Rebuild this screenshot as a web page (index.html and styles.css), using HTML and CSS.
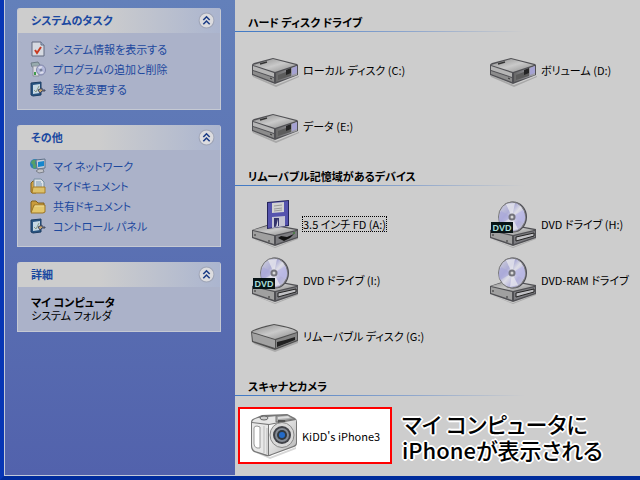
FILE: index.html
```html
<!DOCTYPE html>
<html lang="ja">
<head>
  <meta charset="UTF-8">
  <title>マイ コンピュータ</title>
  <link rel="stylesheet" href="styles.css">
</head>
<body>

  <!-- Shared icon shapes -->
  <svg class="defs" aria-hidden="true">
    <defs>
      <linearGradient id="metal" x1="0" y1="0" x2="1" y2="1">
        <stop offset="0" stop-color="#8c8c8c"/>
        <stop offset="0.5" stop-color="#c9c9c9"/>
        <stop offset="1" stop-color="#8a8a8a"/>
      </linearGradient>
      <linearGradient id="front" x1="0" y1="0" x2="1" y2="0">
        <stop offset="0" stop-color="#686868"/>
        <stop offset="1" stop-color="#a4a4ac"/>
      </linearGradient>
      <linearGradient id="disc" x1="0" y1="0" x2="1" y2="1">
        <stop offset="0" stop-color="#d6d6dc"/>
        <stop offset="0.35" stop-color="#aeaed6"/>
        <stop offset="0.5" stop-color="#dedee6"/>
        <stop offset="0.7" stop-color="#b3b1dc"/>
        <stop offset="1" stop-color="#c8c8ce"/>
      </linearGradient>
      <linearGradient id="body" x1="0" y1="0" x2="1" y2="1">
        <stop offset="0" stop-color="#ffffff"/>
        <stop offset="1" stop-color="#b4b4b4"/>
      </linearGradient>
    </defs>

    <symbol id="hdd" viewBox="0 0 48 48">
      <path d="M1 29L25 39L48 30V31L25 41L2 31Z" fill="#a8a8a8"/>
      <path d="M1 19Q1 18 3 17L22 12L46 18L47 19V29L24 38L1 29Z" fill="#505054"/>
      <path d="M2 19L22 13L45 19L24 26Z" fill="url(#metal)"/>
      <path d="M2 20L23 27V31L2 24Z" fill="#b5b5b5"/>
      <path d="M2 25L23 32V36L2 28Z" fill="#8c8c8c"/>
      <path d="M25 27L46 20V29L25 36Z" fill="url(#front)"/>
      <path d="M27 29L40 24V30L27 34Z" fill="#5c5c5c"/>
      <path d="M35 24L40 22V27L35 29Z" fill="#242424"/>
      <path d="M41 22L46 20V27L41 29Z" fill="#a5a2d2"/>
      <path d="M9 18L16 16" stroke="#333" stroke-width="1.5"/>
      <path d="M19 32L21 33" stroke="#333"/>
    </symbol>

    <symbol id="drive-base" viewBox="0 0 48 48">
      <path d="M2 39L24 47L47 38V39L24 48Z" fill="#aaa"/>
      <path d="M1 30L19 24L47 29V38L24 46L1 38Z" fill="#505054"/>
      <path d="M2 30L19 25L45 30L24 35Z" fill="url(#metal)"/>
      <path d="M2 31L23 36V44L2 37Z" fill="#a0a0a0"/>
      <path d="M25 36L46 31V37L25 44Z" fill="#7c7c80"/>
      <path d="M4 34V36M18 40V42" stroke="#333"/>
    </symbol>

    <symbol id="floppy" viewBox="0 0 48 48">
      <use href="#drive-base"/>
      <path d="M16 2L38 0V26L16 29Z" fill="#24245c"/>
      <path d="M17 3L37 1V25L17 28Z" fill="#5553ae"/>
      <path d="M21 3L33 2V12L21 13Z" fill="#d2d2d2"/>
      <path d="M23 6L31 5M23 9L31 8M23 11L31 10" stroke="#999"/>
      <path d="M21 17L34 16V26L21 28Z" fill="#c5c5d4"/>
      <path d="M23 18L28 18V26L23 27Z" fill="#34346c"/>
      <path d="M25 27L27 19V26Z" fill="#d9d9e5"/>
      <path d="M27 38L30 36L36 37L43 34L39 38L33 41Z" fill="#111"/>
      <circle cx="43" cy="33" r="1" fill="#417d38"/>
    </symbol>

    <symbol id="optical" viewBox="0 0 48 48">
      <use href="#drive-base"/>
      <path d="M27 37L45 33V36L27 41Z" fill="#c0c0c4" stroke="#222"/>
      <ellipse cx="24" cy="17" rx="14" ry="15.5" fill="#4d4d55"/>
      <ellipse cx="23" cy="17" rx="13.5" ry="15" fill="url(#disc)" stroke="#777"/>
      <path d="M23 17L12 11Q8 18 11 24Z" fill="#a9a8da" opacity="0.7"/>
      <path d="M23 17L34 10Q38 17 35 23Z" fill="#bab9e5" opacity="0.8"/>
      <path d="M23 17L17 4L26 3ZM23 17L21 31L29 29Z" fill="#ececf0" opacity="0.7"/>
      <circle cx="23" cy="17" r="3.5" fill="#74747c"/>
      <circle cx="23" cy="17" r="1.5" fill="#d8d8d8"/>
    </symbol>

    <symbol id="removable" viewBox="0 0 48 48">
      <path d="M2 30L24 38L47 29V31L24 40L3 32Z" fill="#aaa"/>
      <path d="M0 20Q1 17 23 12Q46 16 47 20V29L24 38L1 30Z" fill="#505050"/>
      <path d="M1 20Q3 18 23 13Q44 17 46 20L24 27Z" fill="url(#metal)"/>
      <path d="M1 21L24 28V36L2 29Z" fill="#a2a2a2"/>
      <path d="M25 28L46 21V28L25 36Z" fill="#858585"/>
      <path d="M26 30Q35 28 44 25V28L26 35Z" fill="#202020"/>
    </symbol>

    <symbol id="camera" viewBox="0 0 48 48">
      <path d="M4 40L20 45L46 35V37L20 47Z" fill="#d6d6d6"/>
      <path d="M1 10Q1 7 5 6L12 3L37 2L41 4L45 6Q47 7 47 10V31Q47 34 44 35L22 43Q19 45 16 44L4 40Q1 38 1 34Z" fill="#777"/>
      <path d="M2 10Q3 7 8 6L37 3L44 7L19 12Z" fill="#e6e6e6"/>
      <path d="M2 11L18 13V43L5 39Q2 37 2 33Z" fill="#e8e8e8"/>
      <path d="M19 13L46 8V31Q46 33 43 34L19 43Z" fill="url(#body)"/>
      <path d="M4 16Q4 14 7 14L10 15V36L7 36Q4 35 4 32Z" fill="#fff" stroke="#999"/>
      <path d="M14 14V41M17 16V42" stroke="#bbb"/>
      <path d="M26 4L38 3L44 7L26 10Z" fill="#aaa" stroke="#777"/>
      <path d="M28 5L38 4L40 6L28 7Z" fill="#ddd"/>
      <path d="M28 8L35 8V10L28 11Z" fill="#555"/>
      <ellipse cx="14" cy="6" rx="4" ry="2" fill="#ccc" stroke="#666"/>
      <ellipse cx="32" cy="23" rx="12" ry="12.5" fill="#d8d8d8" stroke="#888"/>
      <circle cx="32" cy="23" r="9" fill="#404248"/>
      <circle cx="32" cy="23" r="7" fill="#858b94"/>
      <circle cx="32" cy="23" r="5" fill="#303840"/>
      <circle cx="32" cy="23" r="3" fill="#236bc8"/>
    </symbol>

    <symbol id="sysinfo" viewBox="0 0 16 16">
      <path d="M2 1H11L14 4V15H2Z" fill="#d6dae2" stroke="#626a80"/>
      <path d="M11 1V4H14" fill="#a6bcd8" stroke="#626a80"/>
      <path d="M5 9L7 12L11 6" fill="none" stroke="#c83a20" stroke-width="2"/>
    </symbol>

    <symbol id="programs" viewBox="0 0 16 16">
      <path d="M1 2L8 1L10 4L8 6L2 6Z" fill="#98abae" stroke="#6e7d88"/>
      <path d="M3 5H9V15H3Z" fill="#dcdde2" stroke="#8b90a0"/>
      <path d="M4 11H6V14H4Z" fill="#3f9a4c"/>
      <ellipse cx="11" cy="9" rx="4.5" ry="5" fill="#b4b9dc" stroke="#8086a8"/>
      <path d="M11 9L8 6L12 5ZM11 9L14 12L10 13Z" fill="#dddfec"/>
      <circle cx="11" cy="9" r="1.5" fill="#77809b"/>
    </symbol>

    <symbol id="settings" viewBox="0 0 16 16">
      <path d="M1 2L11 1V14L3 15L1 14Z" fill="#285482" stroke="#1c3d63"/>
      <path d="M3 4L10 3V12L3 13Z" fill="#c6d8e4"/>
      <path d="M4 9L6 11L9 5" fill="none" stroke="#8a9a86"/>
      <path d="M8 9L12 7V9H15V10H12L10 12Z" fill="#c9a56c" stroke="#3b4662"/>
    </symbol>

    <symbol id="network" viewBox="0 0 16 16">
      <circle cx="5" cy="6" r="5" fill="#2f7eb8"/>
      <path d="M1 5Q2 1 6 2L5 5L7 9L4 11Q2 9 3 7Z" fill="#55a068"/>
      <path d="M6 2L15 1V10L7 11Z" fill="#c7ced8" stroke="#5d7088"/>
      <path d="M8 4L14 3V8L8 9Z" fill="#1686cd"/>
      <path d="M9 11H13L14 14L9 15L6 13Z" fill="#c2c3c8" stroke="#7c818c"/>
    </symbol>

    <symbol id="documents" viewBox="0 0 16 16">
      <path d="M1 5L3 3H6V15H2L1 14Z" fill="#d1a345" stroke="#806020"/>
      <path d="M4 1H11L14 4V12H4Z" fill="#dce1e7" stroke="#7890a0"/>
      <path d="M6 4H11M6 6H12M6 8H12" stroke="#7a9ab6"/>
      <path d="M3 9H15V15H2Z" fill="#ddc16a" stroke="#a77c26"/>
    </symbol>

    <symbol id="folder" viewBox="0 0 16 16">
      <path d="M1 4L2 3H6L8 5H14V14H1Z" fill="#c99b3c" stroke="#806020"/>
      <path d="M4 7H15V14L13 15H1Z" fill="#e3c66b" stroke="#9b7426"/>
      <path d="M5 8H14" stroke="#f0df9c"/>
    </symbol>

    <symbol id="chevrons" viewBox="0 0 16 16">
      <circle cx="8" cy="8" r="7" fill="#dcdcdf" stroke="#9fa5b7"/>
      <path d="M5 7.5L8 4.5L11 7.5M5 11.5L8 8.5L11 11.5" fill="none" stroke="#1c3d86" stroke-width="1.5"/>
    </symbol>
  </svg>

  <div class="window">
    <!-- Task pane -->
    <aside class="sidebar">
      <section class="panel">
        <div class="panel-head">
          <h2>システムのタスク</h2>
          <button class="toggle" aria-label="システムのタスクを閉じる"><svg><use href="#chevrons"/></svg></button>
        </div>
        <ul class="tasks">
          <li><a href="#"><svg><use href="#sysinfo"/></svg>システム情報を表示する</a></li>
          <li><a href="#"><svg><use href="#programs"/></svg>プログラムの追加と削除</a></li>
          <li><a href="#"><svg><use href="#settings"/></svg>設定を変更する</a></li>
        </ul>
      </section>

      <section class="panel">
        <div class="panel-head">
          <h2>その他</h2>
          <button class="toggle" aria-label="その他を閉じる"><svg><use href="#chevrons"/></svg></button>
        </div>
        <ul class="tasks">
          <li><a href="#"><svg><use href="#network"/></svg>マイ ネットワーク</a></li>
          <li><a href="#"><svg><use href="#documents"/></svg>マイドキュメント</a></li>
          <li><a href="#"><svg><use href="#folder"/></svg>共有ドキュメント</a></li>
          <li><a href="#"><svg><use href="#settings"/></svg>コントロール パネル</a></li>
        </ul>
      </section>

      <section class="panel">
        <div class="panel-head">
          <h2>詳細</h2>
          <button class="toggle" aria-label="詳細を閉じる"><svg><use href="#chevrons"/></svg></button>
        </div>
        <div class="details">
          <strong>マイ コンピュータ</strong>
          <span>システム フォルダ</span>
        </div>
      </section>
    </aside>

    <!-- Drives and devices -->
    <main class="content">
      <h2 class="group">ハード ディスク ドライブ</h2>
      <div class="drives">
        <a class="drive" href="#"><svg><use href="#hdd"/></svg><span>ローカル ディスク (C:)</span></a>
        <a class="drive" href="#"><svg><use href="#hdd"/></svg><span>ボリューム (D:)</span></a>
        <a class="drive" href="#"><svg><use href="#hdd"/></svg><span>データ (E:)</span></a>
      </div>

      <h2 class="group">リムーバブル記憶域があるデバイス</h2>
      <div class="drives">
        <a class="drive" href="#"><svg><use href="#floppy"/></svg><span class="focused">3.5 インチ FD (A:)</span></a>
        <a class="drive" href="#">
          <svg viewBox="0 0 48 48"><use href="#optical"/><rect x="2" y="22" width="22" height="11" fill="#071315"/><text x="13" y="31" class="dvd-mark">DVD</text></svg>
          <span>DVD ドライブ (H:)</span>
        </a>
        <a class="drive" href="#">
          <svg viewBox="0 0 48 48"><use href="#optical"/><rect x="2" y="22" width="22" height="11" fill="#071315"/><text x="13" y="31" class="dvd-mark">DVD</text></svg>
          <span>DVD ドライブ (I:)</span>
        </a>
        <a class="drive" href="#"><svg><use href="#optical"/></svg><span>DVD-RAM ドライブ</span></a>
        <a class="drive" href="#"><svg><use href="#removable"/></svg><span>リムーバブル ディスク (G:)</span></a>
      </div>

      <h2 class="group">スキャナとカメラ</h2>
      <div class="cameras">
        <a class="drive highlight" href="#"><svg><use href="#camera"/></svg><span>KiDD's iPhone3</span></a>
        <p class="caption">マイ コンピュータに<br>iPhoneが表示される</p>
      </div>
    </main>
  </div>

</body>
</html>
```

FILE: styles.css
```css
* {
  box-sizing: border-box;
}

body {
  margin: 0;
  font-family: "Noto Sans CJK JP", sans-serif;
  font-size: 11px;
  line-height: 20px;
  font-feature-settings: "palt";
  color: #000;
}

h2, p, ul {
  margin: 0;
  padding: 0;
}

h2 {
  font-size: 11px;
}

a {
  color: inherit;
  text-decoration: none;
}

svg {
  display: block;
  flex: none;
}

.defs {
  position: absolute;
  width: 0;
  height: 0;
}

.window {
  display: flex;
  min-height: 100vh;
  overflow: hidden;
  background: #cdcdcd;
  border-left: 4px solid #0736b5;
  border-bottom: 4px solid #002c9c;
}

/* task pane */
.sidebar {
  flex: none;
  width: 231px;
  padding: 8px 14px 0 12px;
  border-left: 1px solid #c3c9d8;
  border-bottom: 1px solid #c3c9d8;
  background: linear-gradient(#6380ba, #5262ac);
}

.panel {
  margin-bottom: 15px;
  border: 1px solid #c5c9d3;
  border-top: 0;
  border-radius: 3px 3px 0 0;
  background: #abb2c9;
}

.panel-head {
  display: flex;
  align-items: center;
  justify-content: space-between;
  height: 25px;
  padding: 0 5px 1px 13px;
  border-radius: 3px 3px 0 0;
  background: linear-gradient(to right, #cdcdcd 40%, #abb5cf);
}

.panel-head h2 {
  color: #1a48a0;
}

.toggle {
  padding: 0;
  border: 0;
  background: none;
  cursor: pointer;
}

.toggle svg {
  width: 17px;
  height: 17px;
}

.tasks {
  list-style: none;
  padding: 6px 12px 10px;
}

.tasks a {
  display: flex;
  align-items: center;
  gap: 7px;
  color: #1c489e;
}

.tasks a:hover {
  text-decoration: underline;
}

.tasks svg {
  width: 16px;
  height: 16px;
}

.details {
  display: flex;
  flex-direction: column;
  padding: 9px 13px;
  line-height: 13px;
}

/* drive list */
.content {
  flex: 1;
  min-width: 0;
}

.group {
  padding: 12px 13px 0;
  background: linear-gradient(to right, #3f78c4, #8ea6cc 60%, #cdcdcd) left bottom / 290px 1px no-repeat;
}

.drives {
  display: grid;
  grid-template-columns: 238px 1fr;
  grid-auto-rows: 56px;
  padding: 10px 0 0 16px;
}

.drive {
  display: flex;
  align-items: center;
  gap: 4px;
  white-space: nowrap;
}

.drive svg {
  width: 48px;
  height: 48px;
}

.focused {
  outline: 1px dotted #000;
  line-height: 14px;
}

.dvd-mark {
  font: bold 9px "Liberation Sans", sans-serif;
  text-anchor: middle;
  fill: #a8dcd8;
}

.cameras {
  display: flex;
  align-items: center;
  gap: 10px;
  padding: 11px 0 12px 3px;
}

.highlight {
  width: 154px;
  height: 57px;
  padding-left: 10px;
  border: 2px solid #f00;
  background: #fff;
}

.caption {
  font-size: 22px;
  font-weight: 500;
  line-height: 26px;
  white-space: nowrap;
  text-shadow: 2px 0 #fff, -2px 0 #fff, 0 2px #fff, 0 -2px #fff, 1px 1px #fff, -1px -1px #fff, 1px -1px #fff, -1px 1px #fff;
}
```
